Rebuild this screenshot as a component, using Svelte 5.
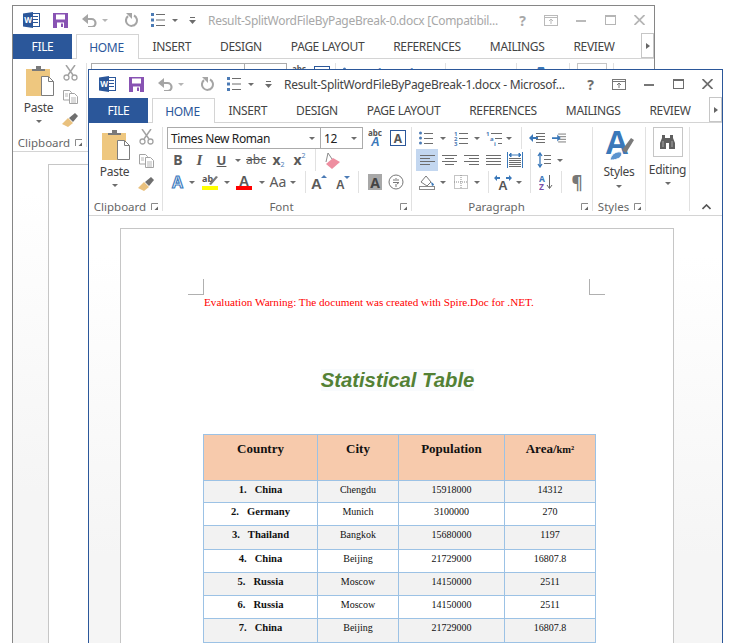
<script>
	const tabs = ["INSERT", "DESIGN", "PAGE LAYOUT", "REFERENCES", "MAILINGS", "REVIEW"];

	// each entry: [kind, cell width]
	const fontRow2 = [["bold", 22], ["italic", 21], ["under", 23], ["caret", 10], ["strike", 26], ["sub", 19], ["sup", 23], ["sp", 4], ["sep", 1], ["eraser", 32]];
	const fontRow3 = [["effect", 21], ["caret", 8], ["hilite", 28], ["caret", 6], ["color", 28], ["caret", 8], ["case", 24], ["caret", 6], ["sp", 9], ["sep", 1], ["grow", 28], ["shrink", 20], ["sp", 4], ["sep", 1], ["sp", 7], ["shadeA", 18], ["sp", 2], ["phonetic", 20]];
	const paraRow1 = [["bullets", 20], ["caret", 14], ["numbers", 22], ["caret", 10], ["multi", 24], ["caret", 6], ["sp", 9], ["sep", 1], ["outdent", 30], ["indent", 14]];
	const paraRow2 = [["left", 22], ["center", 22], ["right", 22], ["justify", 22], ["distrib", 22], ["sp", 4], ["sep", 1], ["spacing", 25], ["caret", 8]];
	const paraRow3 = [["shading", 22], ["caret", 10], ["borders", 26], ["caret", 6], ["sp", 8], ["sep", 1], ["sp", 1], ["dir", 26], ["caret", 6], ["sp", 8], ["sep", 1], ["sort", 30], ["sep", 1], ["pilcrow", 30]];

	const rows = [
		{ n: 1, name: "China", city: "Chengdu", pop: "15918000", area: "14312", h: 22 },
		{ n: 2, name: "Germany", city: "Munich", pop: "3100000", area: "270", h: 23 },
		{ n: 3, name: "Thailand", city: "Bangkok", pop: "15680000", area: "1197", h: 24 },
		{ n: 4, name: "China", city: "Beijing", pop: "21729000", area: "16807.8", h: 23 },
		{ n: 5, name: "Russia", city: "Moscow", pop: "14150000", area: "2511", h: 23 },
		{ n: 6, name: "Russia", city: "Moscow", pop: "14150000", area: "2511", h: 23 },
		{ n: 7, name: "China", city: "Beijing", pop: "21729000", area: "16807.8", h: 24 },
	];
</script>

{#snippet lines(ys, x1, x2)}
	{#each ys as y}
		<line x1={x1} x2={x2} y1={y} y2={y} stroke="#6d6d6d" />
	{/each}
{/snippet}

{#snippet icon(k)}
	{#if k === "bold"}
		<span class="glyph b">B</span>
	{:else if k === "italic"}
		<span class="glyph i">I</span>
	{:else if k === "under"}
		<span class="glyph u">U</span>
	{:else if k === "strike"}
		<span class="glyph strike">abc</span>
	{:else if k === "sub"}
		<span class="glyph b x">x<small class="blue">2</small></span>
	{:else if k === "sup"}
		<span class="glyph b x">x<sup class="blue">2</sup></span>
	{:else if k === "eraser"}
		<svg width="15" height="17" viewBox="0 0 15 17"><path d="M1 12l7-6 7 4-8 7z" fill="#ee8ea0" /><path d="M1 10L3 1l4 6" fill="none" stroke="#8a8a8a" /></svg>
	{:else if k === "effect"}
		<svg width="15" height="16" viewBox="0 0 15 16"><text x="7.5" y="14" text-anchor="middle" class="svgA" fill="#fff" stroke="#3f7cc0" stroke-width="1.2" font-size="16">A</text></svg>
	{:else if k === "hilite"}
		<svg width="16" height="16" viewBox="0 0 16 16"><text x="0" y="8" class="svgB" font-size="9" fill="#555">ab</text><path d="M7 10l7-8 2 1-7 8z" fill="#7a7a7a" /><rect y="12" width="16" height="4" fill="#ffff00" /></svg>
	{:else if k === "color"}
		<svg width="16" height="16" viewBox="0 0 16 16"><text x="8" y="12" text-anchor="middle" class="svgA" font-size="14" fill="#5a5a5a" font-weight="400">A</text><rect y="12" width="16" height="4" fill="#f00" /></svg>
	{:else if k === "case"}
		<span class="glyph aa">Aa</span>
	{:else if k === "grow"}
		<svg width="18" height="16" viewBox="0 0 18 16"><text x="0" y="15" class="svgA" font-size="15" font-weight="400" fill="#5a5a5a">A</text><path d="M10 4l3-3 3 3z" fill="#4c7bb5" /></svg>
	{:else if k === "shrink"}
		<svg width="16" height="16" viewBox="0 0 16 16"><text x="0" y="15" class="svgA" font-size="12" font-weight="400" fill="#5a5a5a">A</text><path d="M8 2l3 3 3-3z" fill="#4c7bb5" /></svg>
	{:else if k === "shadeA"}
		<span class="shade">A</span>
	{:else if k === "phonetic"}
		<svg width="16" height="16" viewBox="0 0 16 16"><circle cx="8" cy="8" r="7" fill="none" stroke="#777" /><path d="M5 6h6M8 4v1M5 8.5h6l-2 1.500M8 10v3" fill="none" stroke="#777" /></svg>
	{:else if k === "bullets"}
		<svg width="14" height="14" viewBox="0 0 14 14"><g fill="#4c7bb5"><circle cx="1.500" cy="2" r="1.500" /><circle cx="1.500" cy="7" r="1.500" /><circle cx="1.500" cy="12" r="1.500" /></g>{@render lines([2.500, 7.500, 12.500], 5, 14)}</svg>
	{:else if k === "numbers"}
		<svg width="14" height="15" viewBox="0 0 14 15"><g fill="#4c7bb5" class="svgB" font-size="6"><text y="5">1</text><text y="10">2</text><text y="15">3</text></g>{@render lines([2.500, 7.500, 12.500], 5, 14)}</svg>
	{:else if k === "multi"}
		<svg width="17" height="15" viewBox="0 0 17 15"><g fill="#4c7bb5" class="svgB" font-size="6"><text y="5">1</text><text x="4" y="10">a</text><text x="8" y="15">i</text></g>{@render lines([2.500], 5, 16)}{@render lines([7.500], 9, 16)}{@render lines([12.500], 12, 16)}</svg>
	{:else if k === "outdent"}
		<svg width="16" height="12" viewBox="0 0 16 12">{@render lines([1.500, 4.500, 7.500, 10.500], 7, 16)}<path d="M0 6l4-4v3h5v2H4v3z" fill="#3a78b9" /></svg>
	{:else if k === "indent"}
		<svg width="16" height="12" viewBox="0 0 16 12">{@render lines([1.500, 4.500, 7.500, 10.500], 7, 16)}<path d="M10 6L6 2v3H0v2h6v3z" fill="#3a78b9" /></svg>
	{:else if k === "left"}
		<svg width="15" height="11" viewBox="0 0 15 11">{@render lines([0.500, 3.500, 6.500, 9.500], 0, 15)}<rect x="10" y="3" width="5" height="1" fill="#c3d7f0" /><rect x="10" y="9" width="5" height="1" fill="#c3d7f0" /></svg>
	{:else if k === "center"}
		<svg width="15" height="11" viewBox="0 0 15 11">{@render lines([0.500, 6.500], 0, 15)}{@render lines([3.500, 9.500], 3, 12)}</svg>
	{:else if k === "right"}
		<svg width="15" height="11" viewBox="0 0 15 11">{@render lines([0.500, 6.500], 0, 15)}{@render lines([3.500, 9.500], 5, 15)}</svg>
	{:else if k === "justify"}
		<svg width="15" height="11" viewBox="0 0 15 11">{@render lines([0.500, 3.500, 6.500, 9.500], 0, 15)}</svg>
	{:else if k === "distrib"}
		<svg width="16" height="16" viewBox="0 0 16 16"><path d="M.5 0v16M15.500 0v16" stroke="#3a78b9" /><path d="M2 3h12M2 3l2-2v4zM14 3l-2-2v4z" stroke="#3a78b9" fill="#3a78b9" />{@render lines([6.500, 8.500, 10.500, 12.500, 14.500], 2, 14)}</svg>
	{:else if k === "spacing"}
		<svg width="14" height="16" viewBox="0 0 14 16"><path d="M3 1v14M1 4l2-3 2 3M1 12l2 3 2-3" fill="none" stroke="#3a78b9" stroke-width="1.300" />{@render lines([3.500, 7.500, 11.500], 7, 14)}</svg>
	{:else if k === "shading"}
		<svg width="16" height="16" viewBox="0 0 16 16"><path d="M2 8l5-6 5 6-4 4z" fill="#fff" stroke="#7a7a7a" /><path d="M12 8c2 1 3 2 3 3l-2 1z" fill="#3a78b9" /><rect x=".5" y="12.500" width="15" height="3" fill="#fff" stroke="#8a8a8a" /></svg>
	{:else if k === "borders"}
		<svg width="14" height="14" viewBox="0 0 14 14"><rect x=".5" y=".5" width="13" height="13" fill="none" stroke="#8a8a8a" stroke-dasharray="1 1" /><path d="M7 0v14M0 7h14" stroke="#8a8a8a" stroke-dasharray="1 1" /></svg>
	{:else if k === "dir"}
		<svg width="18" height="15" viewBox="0 0 18 15"><text x="9" y="15" text-anchor="middle" class="svgA" font-size="13" fill="#555">A</text><path d="M0 3l3-3v2h3v2H3v2zM18 3l-3-3v2h-3v2h3v2z" fill="#3a78b9" /></svg>
	{:else if k === "sort"}
		<svg width="14" height="16" viewBox="0 0 14 16"><text y="7.500" class="svgB" font-size="8.500" fill="#3a78b9">A</text><text y="16" class="svgB" font-size="8.500" fill="#7a4fa8">Z</text><path d="M10.500 1v13M8 11l2.500 3.500L13 11" fill="none" stroke="#666" /></svg>
	{:else if k === "pilcrow"}
		<span class="glyph pil">¶</span>
	{/if}
{/snippet}

{#snippet toolrow(items)}
	<div class="row">
		{#each items as [k, w]}
			{#if k === "caret"}
				<span class="cell" style:width="{w}px"><i class="caret"></i></span>
			{:else if k === "sep"}
				<span class="rowsep"></span>
			{:else if k === "sp"}
				<span class="cell" style:width="{w}px"></span>
			{:else}
				<span class="cell" class:active={k === "left"} style:width="{w}px">{@render icon(k)}</span>
			{/if}
		{/each}
	</div>
{/snippet}

{#snippet grouplabel(text, launcher)}
	<div class="label">
		<span class="labeltext">{text}</span>
		{#if launcher}
			<svg class="launcher" width="7" height="7" viewBox="0 0 7 7"><path d="M.5 7V.5H7" fill="none" stroke="#8a8a8a" /><path d="M7 7H3.500L7 3.500z" fill="#666" /></svg>
		{/if}
	</div>
{/snippet}

<!-- full is false for the back window: the front one hides everything but the top edge -->
{#snippet ribbon(full)}
	<div class="ribbon">
		<section class="group clipboard">
			<div class="body clipbody">
				<div class="bigbtn paste">
					<svg width="28" height="30" viewBox="0 0 28 30">
						<rect x="0" y="3" width="24" height="27" fill="#eec77f" />
						<path d="M6 5V3h4V0h5v3h4v2z" fill="#7a7a7a" />
						<path d="M15.500 10.500h7l5 5v14h-12z" fill="#fff" stroke="#7d7d7d" />
						<path d="M22.500 10.500v5h5" fill="none" stroke="#7d7d7d" />
					</svg>
					<span class="btntext">Paste</span>
					<i class="caret"></i>
				</div>
				<div class="mini">
					<svg width="15" height="16" viewBox="0 0 15 16"><path d="M3 0l7 10M12 0L5 10" stroke="#a3a3a3" stroke-width="1.500" /><circle cx="3.500" cy="12.500" r="2.500" fill="none" stroke="#a3a3a3" stroke-width="1.300" /><circle cx="11.500" cy="12.500" r="2.500" fill="none" stroke="#a3a3a3" stroke-width="1.300" /></svg>
					<svg width="15" height="14" viewBox="0 0 15 14"><path d="M.5.500h6l2 2V10H.5z" fill="#fff" stroke="#a3a3a3" /><path d="M6.500 3.500h5l3 3v7h-8z" fill="#fff" stroke="#a3a3a3" /><path d="M8 8h5M8 10h5M8 12h5M2 4h3M2 6h3" stroke="#b5b5b5" /></svg>
					<svg width="16" height="15" viewBox="0 0 16 15"><path d="M0 11l6-6 5 5-5 4z" fill="#e9c17e" /><path d="M7 5l6-5 3 3-5 6z" fill="#6f6f6f" /></svg>
				</div>
			</div>
			{@render grouplabel("Clipboard", true)}
		</section>

		<section class="group font">
			<div class="body stack">
				<div class="row">
					<span class="select fontname">{full ? "Times New Roman" : ""}<i class="caret"></i></span>
					<span class="select fontsize">{full ? "12" : ""}<i class="caret"></i></span>
					<svg class="abcA" width="14" height="18" viewBox="0 0 14 18"><text x="0" y="7" class="svgB" font-weight="400" font-size="8" fill="#555">abc</text><text x="3" y="17" class="svgA" font-style="italic" font-size="12" fill="#3a78b9">A</text></svg>
					<span class="boxA">A</span>
				</div>
				{#if full}
					{@render toolrow(fontRow2)}
					{@render toolrow(fontRow3)}
				{/if}
			</div>
			{#if full}
				{@render grouplabel("Font", true)}
			{/if}
		</section>

		<section class="group para">
			<div class="body stack">
				{@render toolrow(paraRow1)}
				{#if full}
					{@render toolrow(paraRow2)}
					{@render toolrow(paraRow3)}
				{/if}
			</div>
			{#if full}
				{@render grouplabel("Paragraph", true)}
			{/if}
		</section>

		<section class="group styles">
			<div class="body">
				<div class="bigbtn">
					<svg width="29" height="31" viewBox="0 0 29 31">
						<text x="12" y="24" text-anchor="middle" class="svgA" font-size="33" fill="#3a78b9">A</text>
						<path d="M17 20L26 8l3 2-8 13z" fill="#7a7a7a" />
						<path d="M5 30c1-5 5-9 11-8 2 2 0 6-4 7-2 1-5 1-7 1z" fill="#5b94cf" stroke="#fff" />
					</svg>
					{#if full}
						<span class="btntext">Styles</span>
						<i class="caret"></i>
					{/if}
				</div>
			</div>
			{#if full}
				{@render grouplabel("Styles", true)}
			{/if}
		</section>

		<section class="group editing">
			<div class="body">
				<div class="bigbtn edit">
					<span class="editbox">
						<svg width="15" height="14" viewBox="0 0 15 14"><path d="M2 0h3v3h5V0h3v3l2 5v6H9V8H6v6H0V8l2-5z" fill="#5f5f5f" /><path d="M3 6v6M12 6v6" stroke="#a8a8a8" /></svg>
					</span>
					{#if full}
						<span class="btntext">Editing</span>
						<i class="caret"></i>
					{/if}
				</div>
			</div>
		</section>

		<div class="collapse">
			<svg width="9" height="6" viewBox="0 0 9 6"><path d="M.5 5l4-4 4 4" fill="none" stroke="#555" stroke-width="1.600" /></svg>
		</div>
	</div>
{/snippet}

{#snippet win(cls, title)}
	<div class="window {cls}">
		<header class="titlebar">
			<svg class="word" width="17" height="16" viewBox="0 0 17 16">
				<rect x="7.500" y="1.500" width="9" height="13" fill="#fff" stroke="#2b579a" />
				<path d="M10 4.500h5M10 7.500h5M10 10.500h5" stroke="#2b579a" />
				<path d="M0 1.500L10 0v16L0 14.500z" fill="#2b579a" />
				<text x="5" y="11" text-anchor="middle" class="svgB" font-size="8" fill="#fff">W</text>
			</svg>
			<svg class="save" width="15" height="15" viewBox="0 0 15 15">
				<rect width="15" height="15" fill="#8853b3" />
				<rect x="3" y="1.500" width="9" height="5" fill="#fff" />
				<rect x="4" y="9.500" width="7" height="5.500" fill="#fff" />
				<rect x="8" y="10.500" width="2" height="3.500" fill="#8853b3" />
			</svg>
			<svg class="undo" width="15" height="13" viewBox="0 0 15 13"><path d="M1.500 5h8a4 4 0 0 1 0 8H6" fill="none" stroke="#a5a5a5" stroke-width="2.200" /><path d="M6 0L0 5l6 5z" fill="#a5a5a5" /></svg>
			<i class="caret pale undocaret"></i>
			<svg class="redo" width="14" height="14" viewBox="0 0 14 14"><path d="M9 2.500a5.500 5.500 0 1 1-6 .6" fill="none" stroke="#a5a5a5" stroke-width="2" /><path d="M1 0h6v6z" fill="#a5a5a5" /></svg>
			<svg class="qatlist" width="14" height="14" viewBox="0 0 14 14"><g fill="#4c7bb5"><rect y="0" width="3" height="3" /><rect y="5.500" width="3" height="3" /><rect y="11" width="3" height="3" /></g><path d="M5 1.500h9M5 7h9M5 12.500h9" stroke="#6d6d6d" /></svg>
			<i class="caret qatcaret"></i>
			<svg class="custom" width="7" height="7" viewBox="0 0 7 7"><path d="M1 .5h5" stroke="#6d6d6d" /><path d="M0 3h7L3.500 7z" fill="#6d6d6d" /></svg>
			<span class="doctitle">{title}</span>
			<span class="spacer"></span>
			<span class="help">?</span>
			<svg class="display" width="14" height="11" viewBox="0 0 14 11"><rect x=".5" y=".5" width="13" height="10" fill="none" stroke="#777" /><path d="M.5 2.500h13" stroke="#777" /><path d="M7 9V4M5 6l2-2 2 2" fill="none" stroke="#777" /></svg>
			<svg class="winbtn min" width="10" height="3" viewBox="0 0 10 3"><rect width="10" height="2" y="1" fill="#777" /></svg>
			<svg class="winbtn max" width="11" height="10" viewBox="0 0 11 10"><rect x=".5" y=".5" width="10" height="9" fill="none" stroke="#6d6d6d" /><rect width="11" height="2" fill="#6d6d6d" /></svg>
			<svg class="winbtn close" width="11" height="10" viewBox="0 0 11 10"><path d="M.5 0l10 10M10.500 0L.5 10" stroke="#6d6d6d" stroke-width="1.700" /></svg>
		</header>
		<nav class="tabs">
			<span class="filetab">FILE</span>
			<span class="hometab">HOME</span>
			{#each tabs as t}
				<span class="tab">{t}</span>
			{/each}
			<span class="spacer"></span>
			<span class="more"><i class="rcaret"></i></span>
		</nav>
		{@render ribbon(cls === "front")}
		<div class="docarea">
			<div class="page">
				{#if cls === "front"}
					<i class="mark tl"></i>
					<i class="mark tr"></i>
					<p class="warning">Evaluation Warning: The document was created with Spire.Doc for .NET.</p>
					<h1 class="doc-h"><span>Statistical Table</span></h1>
					<table>
						<colgroup><col class="c1" /><col class="c2" /><col class="c3" /><col class="c4" /></colgroup>
						<thead>
							<tr>
								<th>Country</th>
								<th>City</th>
								<th>Population</th>
								<th>Area/<small>km²</small></th>
							</tr>
						</thead>
						<tbody>
							{#each rows as r}
								<tr style:height="{r.h}px">
									<td class="name"><span class="num">{r.n}.</span>{r.name}</td>
									<td>{r.city}</td>
									<td>{r.pop}</td>
									<td>{r.area}</td>
								</tr>
							{/each}
						</tbody>
					</table>
				{/if}
			</div>
		</div>
	</div>
{/snippet}

<div class="desktop">
	{@render win("back", "Result-SplitWordFileByPageBreak-0.docx [Compatibil...")}
	{@render win("front", "Result-SplitWordFileByPageBreak-1.docx - Microsof...")}
</div>

<style>
	:global(body) {
		margin: 0;
		background: #fff;
	}

	.desktop {
		position: relative;
		width: 734px;
		height: 643px;
		overflow: hidden;
		background: #fff;
		font-family: "Noto Sans", sans-serif;
		font-size: 12px;
		color: #444;
	}

	.window {
		position: absolute;
		box-sizing: border-box;
		height: 720px;
		border: 1px solid #868686;
		background: #fff;
		display: flex;
		flex-direction: column;
	}

	.window.back {
		left: 12px;
		top: 5px;
		width: 643px;
	}

	.window.front {
		left: 88px;
		top: 69px;
		width: 635px;
		border-color: #2b579a;
	}

	/* title bar */
	.titlebar {
		height: 28px;
		flex: none;
		display: flex;
		align-items: center;
		position: relative;
	}

	.word { margin-left: 10px; flex: none; }
	.save { margin-left: 13px; flex: none; }
	.undo { margin-left: 14px; flex: none; }
	.undocaret { margin-left: 5px; flex: none; }
	.redo { margin-left: 17px; flex: none; }
	.qatlist { margin-left: 12px; flex: none; }
	.qatcaret { margin-left: 7px; flex: none; }
	.custom { margin-left: 11px; flex: none; }

	.doctitle {
		margin-left: 12px;
		font-size: 12px;
		letter-spacing: -0.3px;
		color: #444;
		white-space: nowrap;
	}

	.back .doctitle,
	.back .help {
		color: #a8a8a8;
	}

	.back .display,
	.back .winbtn {
		opacity: 0.5;
	}

	.spacer { flex: 1; }

	.help {
		font-weight: 700;
		font-size: 14px;
		color: #6d6d6d;
		margin-right: 18px;
		flex: none;
	}

	.display { margin-right: 18px; flex: none; }
	.min { margin-right: 19px; flex: none; }
	.max { margin-right: 18px; flex: none; }
	.close { margin-right: 9px; flex: none; }

	/* tabs */
	.tabs {
		height: 25px;
		flex: none;
		box-sizing: border-box;
		display: flex;
		align-items: stretch;
		border-bottom: 1px solid #d4d4d4;
		font-size: 12px;
		letter-spacing: -0.35px;
		color: #444;
	}

	.filetab {
		flex: none;
		width: 59px;
		background: #2b579a;
		color: #fff;
		display: flex;
		align-items: center;
		justify-content: center;
		height: 25px;
	}

	.hometab {
		flex: none;
		box-sizing: border-box;
		width: 63px;
		height: 25px;
		margin-left: 4px;
		margin-right: -1px;
		padding-right: 2px;
		background: #fff;
		color: #2b579a;
		border: 1px solid #d4d4d4;
		border-bottom: none;
		display: flex;
		align-items: center;
		justify-content: center;
	}

	.tab {
		flex: none;
		padding: 0 14.5px;
		display: flex;
		align-items: center;
		white-space: nowrap;
	}

	.more {
		flex: none;
		box-sizing: border-box;
		width: 13px;
		height: 25px;
		border: 1px solid #c6c6c6;
		display: flex;
		align-items: center;
		justify-content: center;
		margin-top: -1px;
	}

	.rcaret {
		border-left: 4px solid #666;
		border-top: 3px solid transparent;
		border-bottom: 3px solid transparent;
	}

	/* ribbon */
	.ribbon {
		height: 93px;
		flex: none;
		box-sizing: border-box;
		display: flex;
		padding: 4px 0 4px;
		border-bottom: 1px solid #d4d4d4;
	}

	.group {
		box-sizing: border-box;
		display: flex;
		flex-direction: column;
		border-right: 1px solid #e1e1e1;
		position: relative;
		flex: none;
	}

	.clipboard { width: 74px; }
	.font { width: 249px; }
	.para { width: 181px; }
	.styles { width: 53px; }
	.editing { width: 44px; }

	.body {
		flex: 1;
		min-height: 0;
	}

	.label {
		height: 14px;
		display: flex;
		align-items: center;
		color: #666;
		font-size: 11.500px;
		margin-bottom: -2px;
	}

	.labeltext {
		flex: 1;
		text-align: center;
	}

	.launcher {
		margin-right: 4px;
		flex: none;
	}

	.clipbody {
		display: flex;
		padding-left: 13px;
	}

	.bigbtn {
		display: flex;
		flex-direction: column;
		align-items: center;
		width: 100%;
		padding-top: 3px;
	}

	.paste {
		width: 28px;
	}

	.paste .btntext { margin-left: -3px; margin-top: 4px; }

	.btntext {
		font-size: 12px;
		letter-spacing: -0.3px;
		color: #444;
		margin-top: 3px;
		line-height: 16px;
	}

	.bigbtn .caret {
		margin-top: 5px;
	}

	.paste .caret { margin-left: -3px; margin-top: 4px; }

	.mini {
		display: flex;
		flex-direction: column;
		align-items: center;
		width: 16px;
		margin-left: 8px;
		padding-top: 2px;
		gap: 9px;
	}

	.edit { padding-top: 0; }

	.editbox {
		box-sizing: border-box;
		width: 30px;
		height: 30px;
		border: 1px solid #c6c6c6;
		display: flex;
		align-items: center;
		justify-content: center;
	}

	.edit .btntext { margin-top: 5px; }
	.edit .caret { margin-top: 4px; }

	.collapse {
		flex: 1;
		display: flex;
		align-items: flex-end;
		justify-content: center;
		padding: 0 0 1px;
	}

	.stack {
		padding-left: 4px;
		box-sizing: border-box;
		display: flex;
		flex-direction: column;
	}

	.row {
		height: 22px;
		flex: none;
		display: flex;
		align-items: center;
	}

	.cell {
		height: 22px;
		flex: none;
		display: flex;
		align-items: center;
		justify-content: center;
	}

	.cell.active { background: #c3d7f0; }

	.rowsep {
		width: 1px;
		height: 22px;
		background: #e1e1e1;
		flex: none;
	}

	.caret {
		display: block;
		width: 0;
		height: 0;
		border-top: 3px solid #6d6d6d;
		border-left: 3px solid transparent;
		border-right: 3px solid transparent;
	}

	.caret.pale { border-top-color: #b5b5b5; }

	.select {
		box-sizing: border-box;
		height: 22px;
		border: 1px solid #ababab;
		display: flex;
		align-items: center;
		justify-content: space-between;
		padding: 0 5px 0 3px;
		color: #222;
		font-size: 12px;
		letter-spacing: -0.4px;
		flex: none;
	}

	.fontname { width: 154px; }
	.fontsize { width: 42px; margin-left: 0; border-left: none; }
	.abcA { margin-left: 5px; }

	.boxA {
		box-sizing: border-box;
		width: 16px;
		height: 16px;
		margin-left: 8px;
		border: 1px solid #2b579a;
		display: flex;
		align-items: center;
		justify-content: center;
		font-weight: 700;
		font-size: 12px;
		color: #555;
	}

	.glyph {
		font-size: 13px;
		color: #5a5a5a;
		line-height: 1;
	}

	.glyph.b { font-weight: 700; font-size: 14px; }
	.glyph.i { font-family: "Liberation Serif", serif; font-style: italic; font-size: 15px; font-weight: 700; }
	.glyph.u { font-weight: 700; font-size: 13px; text-decoration: underline; }
	.glyph.strike { text-decoration: line-through; font-size: 12px; }
	.glyph.aa { font-size: 14px; }
	.glyph.pil { font-size: 17px; color: #777; font-weight: 700; }

	.x small, .x sup {
		font-size: 7px;
		font-weight: 400;
	}

	.x small { vertical-align: -2px; }
	.x sup { vertical-align: 7px; line-height: 0; }
	.blue { color: #4c7bb5; }

	.shade {
		width: 14px;
		height: 16px;
		background: #a8a8a8;
		color: #444;
		font-weight: 700;
		font-size: 14px;
		display: flex;
		align-items: center;
		justify-content: center;
	}

	.svgA {
		font-family: "Liberation Sans", sans-serif;
		font-weight: 700;
	}

	.svgB {
		font-family: "Noto Sans", sans-serif;
		font-weight: 700;
	}

	/* document */
	.docarea {
		flex: 1;
		padding: 12px 48px 0 31px;
		background: linear-gradient(#fff 40px, #f5f5f5 340px);
	}

	.page {
		position: relative;
		box-sizing: border-box;
		height: 600px;
		border: 1px solid #c6c6c6;
		padding: 67px 0 0 83px;
		background: #fff;
	}

	.back .docarea { padding-top: 12px; padding-left: 35px; }

	.mark {
		position: absolute;
		top: 50px;
		width: 15px;
		height: 15px;
		border-bottom: 1px solid #b0b0b0;
	}

	.mark.tl { left: 67px; border-right: 1px solid #b0b0b0; }
	.mark.tr { left: 468px; border-left: 1px solid #b0b0b0; }

	.warning {
		margin: 0;
		font-family: "Liberation Serif", serif;
		font-size: 11.180px;
		line-height: 12px;
		color: #f00;
		white-space: nowrap;
	}

	.doc-h {
		margin: 60px 0 0;
		width: 387px;
		text-align: center;
		font-family: "Liberation Sans", sans-serif;
		font-size: 20.300px;
		font-weight: 700;
		font-style: italic;
		line-height: 24px;
		color: #538135;
	}

	.doc-h span { background: #f9fbfd; }

	table {
		margin: 42px 0 0 -1px;
		width: 392px;
		table-layout: fixed;
		border-collapse: collapse;
		font-family: "Liberation Serif", serif;
		font-size: 10px;
		color: #111;
		background: #fff;
	}

	.c1 { width: 114px; }
	.c2 { width: 81px; }
	.c3 { width: 106px; }
	.c4 { width: 91px; }

	th, td {
		border: 1px solid #9cc2e5;
		padding: 3px 0 0;
		text-align: center;
		vertical-align: top;
		line-height: 12px;
	}

	th {
		height: 39px;
		background: #f7caac;
		font-size: 13px;
		line-height: 16px;
		padding-top: 6px;
	}

	th small { font-size: 10.500px; }

	tbody tr:nth-child(odd) td { background: #f2f2f2; }

	td.name {
		font-weight: 700;
		font-size: 10.600px;
	}

	.num { margin-right: 8px; }
</style>
